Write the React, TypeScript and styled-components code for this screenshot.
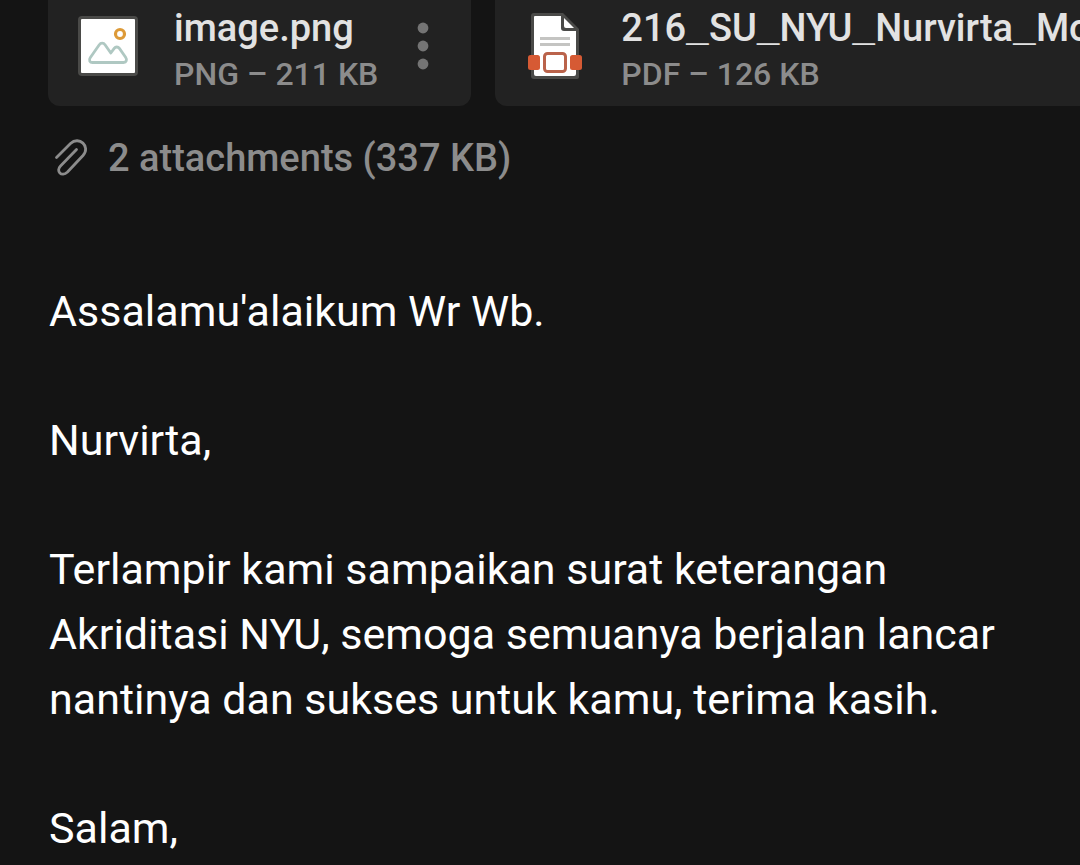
import React from "react";
import styled, { createGlobalStyle } from "styled-components";

const GlobalStyle = createGlobalStyle`
  body {
    margin: 0;
    background: #141414;
    font-family: Roboto, "Liberation Sans", sans-serif;
  }
`;

const Message = styled.main`
  display: flex;
  flex-direction: column;
`;

const AttachmentStrip = styled.ul`
  display: flex;
  gap: 24px;
  margin: 0;
  padding: 0 0 0 48px;
  list-style: none;
  overflow: hidden;
`;

const AttachmentCard = styled.li`
  display: flex;
  flex: none;
  align-items: center;
  padding: 0 0 14px 30px;
  background: #222222;
  border-radius: 0 0 12px 12px;
`;

const FileIcon = styled.svg`
  flex: none;
  width: 60px;
  height: 72px;
  margin-right: 36px;
`;

const FileInfo = styled.div`
  white-space: nowrap;
  font-weight: 500;
`;

const FileName = styled.div`
  font-size: 38px;
  line-height: 56px;
  color: #e2e2e2;
`;

const WideUnderscore = styled.span`
  font-family: "Liberation Mono", monospace;
  font-weight: 700;
  line-height: 1;
`;

const FileMeta = styled.div`
  font-size: 32px;
  line-height: 36px;
  color: #8c8c8c;
`;

const MenuButton = styled.button`
  display: flex;
  align-items: center;
  justify-content: center;
  flex: none;
  width: 93px;
  height: 72px;
  padding: 0 4px 0 0;
  border: 0;
  background: none;
  color: #747474;
`;

const Summary = styled.div`
  display: flex;
  align-items: center;
  gap: 20px;
  padding: 26px 48px 0 52px;
  font-size: 38px;
  line-height: 52px;
  font-weight: 500;
  color: #8c8c8c;
`;

const ClipIcon = styled.svg`
  flex: none;
  width: 36px;
  height: 40px;
`;

const MessageBody = styled.article`
  display: flex;
  flex-direction: column;
  gap: 64px;
  padding: 95px 49px 0;
  font-size: 43px;
  line-height: 65px;
  color: #ffffff;
`;

const Paragraph = styled.p`
  margin: 0;
`;

function ImageFileIcon() {
  return (
    <FileIcon viewBox="0 0 60 72" aria-hidden="true">
      <rect x="0" y="6" width="60" height="60" rx="4" fill="#4a4a48" />
      <rect x="3" y="9" width="54" height="54" rx="1" fill="#ffffff" />
      <circle cx="42" cy="24" r="4.5" fill="none" stroke="#dd9a38" strokeWidth="3.2" />
      <path
        d="M14.5 52.5H45.5C48.5 52.5 49.3 49.8 47.6 47.2L41.4 38.4C40 36.5 37.6 36.5 36.2 38.4L32.8 43L27.2 35C25.5 32.6 22.8 32.6 21.1 35L12.2 47.8C10.6 50.2 11.8 52.5 14.5 52.5Z"
        fill="none"
        stroke="#afc8c2"
        strokeWidth="2.8"
        strokeLinejoin="round"
      />
    </FileIcon>
  );
}

function PdfFileIcon() {
  return (
    <FileIcon viewBox="-3 0 60 72" aria-hidden="true">
      <path
        d="M6 3H35L51 19V67Q51 69 49 69H6Q3 69 3 66V6Q3 3 6 3Z"
        fill="#4a4a48"
      />
      <path d="M7 6H33V18Q33 21 36 21H48V64Q48 66 46 66H8Q6 66 6 64V7Q6 6 7 6Z" fill="#ffffff" />
      <path d="M36 8L46 18H38Q36 18 36 16Z" fill="#ffffff" />
      <path d="M12 28.5H42M12 34.5H42" stroke="#c4c4c2" strokeWidth="3" />
      <rect x="0" y="45" width="12" height="15" rx="2.5" fill="#d65a34" />
      <rect x="42" y="45" width="12" height="15" rx="2.5" fill="#d65a34" />
      <rect x="12" y="42" width="30" height="24" fill="#ffffff" />
      <rect x="16.5" y="43.5" width="21" height="18" rx="3" fill="#ffffff" stroke="#ba634b" strokeWidth="3" />
    </FileIcon>
  );
}

interface Attachment {
  name: string;
  meta: string;
  icon: React.ReactNode;
}

const attachments: Attachment[] = [
  { name: "image.png", meta: "PNG – 211 KB", icon: <ImageFileIcon /> },
  { name: "216_SU_NYU_Nurvirta_Mo", meta: "PDF – 126 KB", icon: <PdfFileIcon /> },
];

const paragraphs = [
  "Assalamu'alaikum Wr Wb.",
  "Nurvirta,",
  "Terlampir kami sampaikan surat keterangan Akriditasi NYU, semoga semuanya berjalan lancar nantinya dan sukses untuk kamu, terima kasih.",
  "Salam,",
];

export default function App() {
  return (
    <>
      <GlobalStyle />
      <Message>
        <AttachmentStrip>
          {attachments.map(({ name, meta, icon }) => (
            <AttachmentCard key={name}>
              {icon}
              <FileInfo>
                <FileName>
                  {name.split("_").map((part, index) => (
                    <React.Fragment key={index}>
                      {index > 0 && <WideUnderscore>_</WideUnderscore>}
                      {part}
                    </React.Fragment>
                  ))}
                </FileName>
                <FileMeta>{meta}</FileMeta>
              </FileInfo>
              <MenuButton type="button" aria-label={`Options for ${name}`}>
                <svg width="12" height="48" viewBox="0 0 12 48" fill="currentColor" aria-hidden="true">
                  <circle cx="6" cy="6" r="5.4" />
                  <circle cx="6" cy="24" r="5.4" />
                  <circle cx="6" cy="42" r="5.4" />
                </svg>
              </MenuButton>
            </AttachmentCard>
          ))}
        </AttachmentStrip>
        <Summary>
          <ClipIcon viewBox="0 0 36 40" aria-hidden="true">
            <path
              d="M4.5 19.5L18.5 5.5C27 -2.5 39 8.5 31 17.5L15.5 34C9.5 39.5 3.5 33 8.5 28L24.5 11.5"
              fill="none"
              stroke="currentColor"
              strokeWidth="2.8"
              strokeLinecap="round"
            />
          </ClipIcon>
          <span>2 attachments (337 KB)</span>
        </Summary>
        <MessageBody>
          {paragraphs.map((text) => (
            <Paragraph key={text}>{text}</Paragraph>
          ))}
        </MessageBody>
      </Message>
    </>
  );
}
